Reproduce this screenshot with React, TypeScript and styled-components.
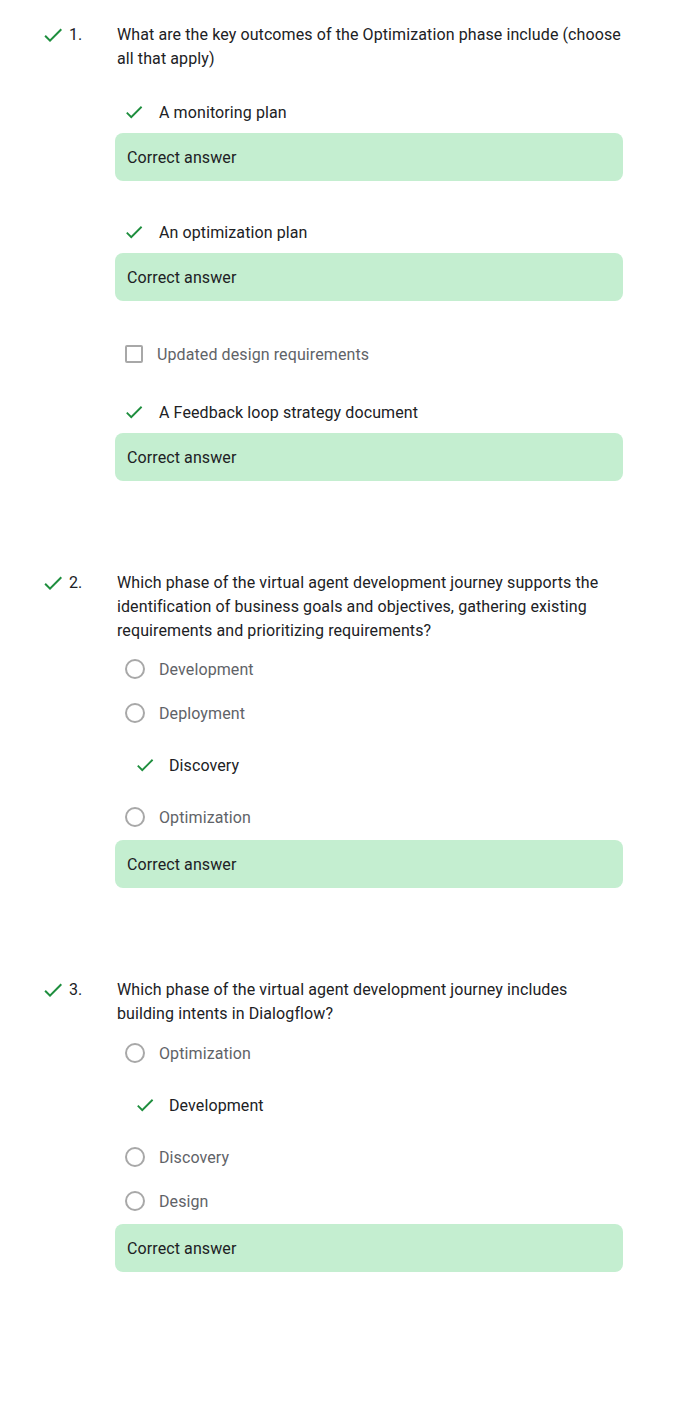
import React from "react";
import styled, { createGlobalStyle } from "styled-components";

const Global = createGlobalStyle`
  html, body { margin: 0; padding: 0; background: #ffffff; }
  body { font-family: Roboto, "Noto Sans", Arial, sans-serif; color: #202124; }
`;

const Page = styled.main`
  padding: 23px 57px 120px 44px;
  display: flex;
  flex-direction: column;
  gap: 90px;
`;

const Question = styled.section`
  display: grid;
  grid-template-columns: 71px 1fr;
`;

const Marker = styled.div`
  display: flex;
  align-items: flex-start;
  height: 24px;
  font-size: 16px;
  line-height: 24px;
  color: #202124;
`;

const MarkerIcon = styled.span`
  display: flex;
  align-items: center;
  height: 24px;
  margin-left: -3px;
  margin-right: 4px;
`;

const Body = styled.div`
  display: flex;
  flex-direction: column;
`;

const Prompt = styled.div`
  padding-left: 2px;
  font-size: 16px;
  line-height: 24px;
  color: #202124;
  letter-spacing: 0.1px;
`;

const Options = styled.div<{ $top: number }>`
  display: flex;
  flex-direction: column;
  margin-top: ${(p) => p.$top}px;
`;

const Item = styled.div<{ $after: number }>`
  display: flex;
  flex-direction: column;
  margin-bottom: ${(p) => p.$after}px;
`;

const Row = styled.div<{ $h: number; $pad: number; $gap: number; $selected?: boolean }>`
  display: flex;
  align-items: center;
  height: ${(p) => p.$h}px;
  padding-left: ${(p) => p.$pad}px;
  gap: ${(p) => p.$gap}px;
  font-size: 16px;
  letter-spacing: 0.1px;
  color: ${(p) => (p.$selected ? "#202124" : "#5f6368")};
`;

const RadioCircle = styled.span`
  width: 20px;
  height: 20px;
  box-sizing: border-box;
  border: 2px solid #a8a8a8;
  border-radius: 50%;
  flex: none;
`;

const CheckBox = styled.span`
  width: 18px;
  height: 18px;
  box-sizing: border-box;
  border: 2px solid #a8a8a8;
  border-radius: 2px;
  flex: none;
`;

const Feedback = styled.div<{ $top?: number }>`
  margin-top: ${(p) => p.$top ?? 0}px;
  height: 48px;
  display: flex;
  align-items: center;
  padding-left: 12px;
  background: #c4eed0;
  border-radius: 8px;
  font-size: 16px;
  letter-spacing: 0.1px;
  color: #202124;
`;

const Check = ({ size }: { size: number }) => (
  <svg width={size} height={size} viewBox="0 0 24 24" style={{ flex: "none", display: "block" }}>
    <path fill="#1e8e3e" d="M9 16.17L4.83 12l-1.42 1.41L9 19 21 7l-1.41-1.41z" />
  </svg>
);

type Opt = { label: string; correct?: boolean };

const Header = ({ n }: { n: number }) => (
  <Marker>
    <MarkerIcon>
      <Check size={24} />
    </MarkerIcon>
    {n}.
  </Marker>
);

const multi: Opt[] = [
  { label: "A monitoring plan", correct: true },
  { label: "An optimization plan", correct: true },
  { label: "Updated design requirements" },
  { label: "A Feedback loop strategy document", correct: true },
];

const RadioQuestion = ({
  n,
  prompt,
  opts,
  top,
}: {
  n: number;
  prompt: React.ReactNode;
  opts: Opt[];
  top: number;
}) => (
  <Question>
    <Header n={n} />
    <Body>
      <Prompt>{prompt}</Prompt>
      <Options $top={top}>
        {opts.map((o) =>
          o.correct ? (
            <Row key={o.label} $h={60} $pad={19} $gap={13} $selected>
              <Check size={22} />
              {o.label}
            </Row>
          ) : (
            <Row key={o.label} $h={44} $pad={10} $gap={14}>
              <RadioCircle />
              {o.label}
            </Row>
          )
        )}
        <Feedback $top={1}>Correct answer</Feedback>
      </Options>
    </Body>
  </Question>
);

export default function App() {
  return (
    <>
      <Global />
      <Page>
        <Question>
          <Header n={1} />
          <Body>
            <Prompt>
              What are the key outcomes of the Optimization phase include (choose all that apply)
            </Prompt>
            <Options $top={20}>
              {multi.map((o, i) => (
                <Item key={o.label} $after={i === multi.length - 1 ? 0 : o.correct ? 30 : 14}>
                  {o.correct ? (
                    <Row $h={42} $pad={8} $gap={14} $selected>
                      <Check size={22} />
                      {o.label}
                    </Row>
                  ) : (
                    <Row $h={46} $pad={10} $gap={14}>
                      <CheckBox />
                      {o.label}
                    </Row>
                  )}
                  {o.correct && <Feedback>Correct answer</Feedback>}
                </Item>
              ))}
            </Options>
          </Body>
        </Question>
        <RadioQuestion
          n={2}
          top={4}
          prompt="Which phase of the virtual agent development journey supports the identification of business goals and objectives, gathering existing requirements and prioritizing requirements?"
          opts={[
            { label: "Development" },
            { label: "Deployment" },
            { label: "Discovery", correct: true },
            { label: "Optimization" },
          ]}
        />
        <RadioQuestion
          n={3}
          top={5}
          prompt="Which phase of the virtual agent development journey includes building intents in Dialogflow?"
          opts={[
            { label: "Optimization" },
            { label: "Development", correct: true },
            { label: "Discovery" },
            { label: "Design" },
          ]}
        />
      </Page>
    </>
  );
}
